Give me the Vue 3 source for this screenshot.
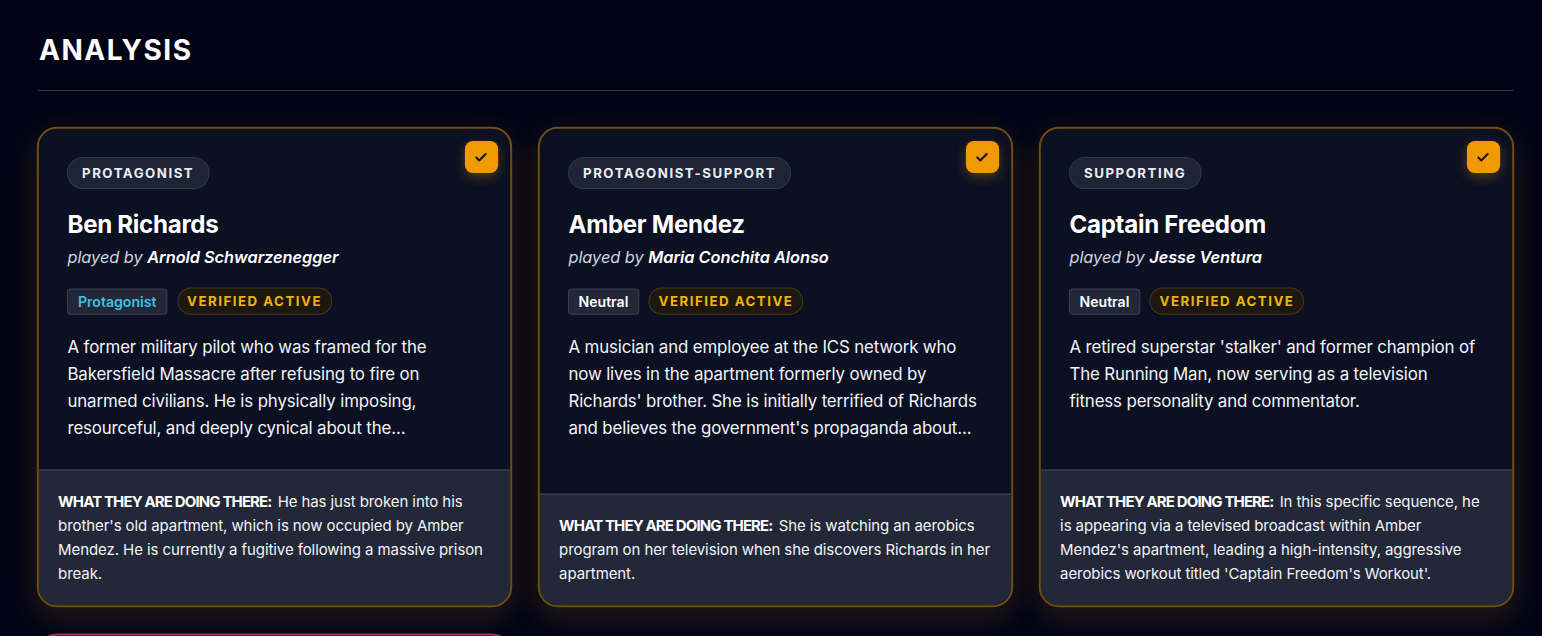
<template>
  <div class="page">
    <h2 class="title">ANALYSIS</h2>

    <div class="grid">
      <div v-for="c in characters" :key="c.name" class="card">
        <div class="check">
          <svg width="14" height="14" viewBox="0 0 24 24" fill="none" stroke="#0b1022" stroke-width="3.4" stroke-linecap="round" stroke-linejoin="round">
            <path d="M4 13l5 5L20 7" />
          </svg>
        </div>
        <div class="body">
          <span class="role">{{ c.role }}</span>
          <h3 class="name">{{ c.name }}</h3>
          <p class="actor">played by <strong>{{ c.actor }}</strong></p>
          <div class="badges">
            <span class="align" :class="c.alignClass">{{ c.align }}</span>
            <span class="verified">VERIFIED ACTIVE</span>
          </div>
          <p class="desc">{{ c.desc }}</p>
        </div>
        <div class="doing">
          <strong>WHAT THEY ARE DOING THERE:</strong> {{ c.doing }}
        </div>
      </div>
      <div class="card pink"></div>
      <div class="card dashed"></div>
    </div>
  </div>
</template>

<script setup>
const characters = [
  {
    role: 'PROTAGONIST',
    name: 'Ben Richards',
    actor: 'Arnold Schwarzenegger',
    align: 'Protagonist',
    alignClass: 'hero',
    desc: 'A former military pilot who was framed for the Bakersfield Massacre after refusing to fire on unarmed civilians. He is physically imposing, resourceful, and deeply cynical about the...',
    doing: "He has just broken into his brother's old apartment, which is now occupied by Amber Mendez. He is currently a fugitive following a massive prison break."
  },
  {
    role: 'PROTAGONIST-SUPPORT',
    name: 'Amber Mendez',
    actor: 'Maria Conchita Alonso',
    align: 'Neutral',
    alignClass: 'neutral',
    desc: "A musician and employee at the ICS network who now lives in the apartment formerly owned by Richards' brother. She is initially terrified of Richards and believes the government's propaganda about...",
    doing: 'She is watching an aerobics program on her television when she discovers Richards in her apartment.'
  },
  {
    role: 'SUPPORTING',
    name: 'Captain Freedom',
    actor: 'Jesse Ventura',
    align: 'Neutral',
    alignClass: 'neutral',
    desc: "A retired superstar 'stalker' and former champion of The Running Man, now serving as a television fitness personality and commentator.",
    doing: "In this specific sequence, he is appearing via a televised broadcast within Amber Mendez's apartment, leading a high-intensity, aggressive aerobics workout titled 'Captain Freedom's Workout'."
  }
]
</script>

<style>
html, body { margin: 0; background: #020416; overflow: hidden; height: 636px; }
</style>

<style scoped>
.page {
  padding: 32px 29px 0 38px;
  font-family: Inter, "Noto Sans", sans-serif;
  color: #fff;
  background: #020416;
}
.title {
  margin: 0 0 37px;
  padding-bottom: 21px;
  border-bottom: 1px solid #333847;
  font-size: 28px;
  line-height: 37px;
  font-weight: 700;
  letter-spacing: 1.5px;
  text-indent: 1px;
}
.grid {
  display: grid;
  grid-template-columns: repeat(3, 1fr);
  gap: 28px;
}
.card {
  position: relative;
  display: flex;
  flex-direction: column;
  background: #0b1022;
  border: 2px solid #6f4e10;
  border-radius: 20px;
  box-shadow: 0 10px 30px rgba(245, 158, 11, 0.15);
  overflow: hidden;
  transform: scale(1.005);
}
.card.pink { height: 200px; border-color: #a83060; box-shadow: none; }
.card.dashed {
  height: 200px;
  border: 1px dashed #6b6048;
  box-shadow: none;
  background: transparent;
  transform: none;
  margin-top: 3px;
}
.check {
  position: absolute;
  top: 12px;
  right: 12.5px;
  width: 32.5px;
  height: 32px;
  display: flex;
  align-items: center;
  justify-content: center;
  background: #f09a00;
  border-radius: 8px;
  box-shadow: 0 4px 12px rgba(245, 158, 11, 0.3);
}
.body {
  flex: 1;
  padding: 28px 30px 27px 28.5px;
}
.role {
  display: inline-block;
  margin-left: -0.5px;
  padding: 0 14px;
  height: 30px;
  line-height: 30px;
  border: 1px solid #32384b;
  border-radius: 16px;
  background: #1e2436;
  color: #e8edf4;
  font-size: 13.2px;
  font-weight: 700;
  letter-spacing: 1.5px;
}
.name {
  margin: 20px 0 0;
  font-size: 24px;
  line-height: 32px;
  font-weight: 700;
  letter-spacing: -0.3px;
}
.actor {
  margin: 4px 0 0;
  font-size: 16.3px;
  line-height: 24px;
  font-style: italic;
  color: #cbd5e1;
  letter-spacing: -0.05px;
}
.actor strong { color: #fff; font-weight: 600; }
.badges {
  display: flex;
  align-items: center;
  gap: 9.5px;
  margin: 18px 0 0 -0.5px;
}
.align {
  padding: 0 10px;
  height: 24px;
  line-height: 24px;
  border: 1px solid #3a4052;
  border-radius: 4px;
  background: #232838;
  font-size: 14px;
  font-weight: 600;
}
.align.hero { color: #3fc1df; }
.align.neutral { color: #fff; padding: 0 9.5px; }
.verified {
  padding: 0 9px;
  height: 25px;
  line-height: 25px;
  border: 1px solid #493814;
  border-radius: 14px;
  background: #1c1810;
  color: #efb506;
  font-size: 13.2px;
  font-weight: 700;
  letter-spacing: 1.5px;
}
.desc {
  margin: 19px 0 0;
  font-size: 16.8px;
  letter-spacing: -0.15px;
  line-height: 27px;
  color: #f1f4f8;
}
.doing {
  padding: 19px 19.2px 19px;
  border-top: 1px solid #474c5c;
  background: #232838;
  font-size: 14.92px;
  letter-spacing: -0.08px;
  line-height: 24px;
  color: #f1f4f8;
}
.doing strong {
  color: #fff;
  font-weight: 700;
  letter-spacing: -0.85px;
  margin-right: 2px;
}
</style>
